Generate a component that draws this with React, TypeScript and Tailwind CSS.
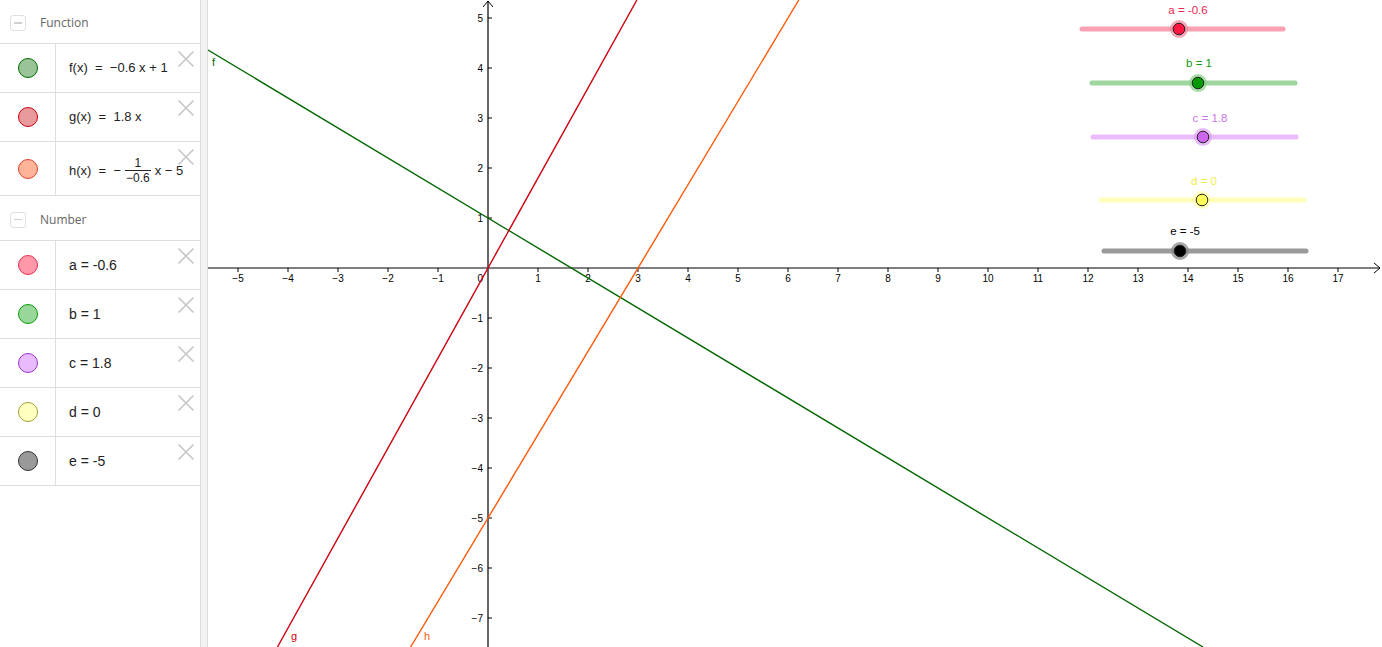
import React from "react";

const OX = 280;
const OY = 268;
const S = 50;
const W = 1174;
const H = 647;
const X = (x: number) => OX + S * x;
const Y = (y: number) => OY - S * y;

function fmt(n: number) {
  return n < 0 ? "\u2212" + Math.abs(n) : String(n);
}

function CloseIcon() {
  return (
    <svg width="18" height="18" viewBox="0 0 18 18" className="absolute right-[5px] top-[6px]">
      <path d="M1.5 1.5 L16.5 16.5 M16.5 1.5 L1.5 16.5" stroke="#c6c6c6" strokeWidth="1.6" fill="none" />
    </svg>
  );
}

function Header({ label, h }: { label: string; h: string }) {
  return (
    <div className={`flex items-center border-b border-[#dedede] pl-[10px] pt-[3px] ${h}`}>
      <div className="flex h-[16px] w-[16px] items-center justify-center rounded-[3px] border border-[#e0e0e0]">
        <div className="h-[1.5px] w-[8px] bg-[#cfcfcf]" />
      </div>
      <span className="ml-[14px] text-[12px] text-[#666]" style={{ fontFamily: "'Open Sans', 'Liberation Sans', sans-serif" }}>
        {label}
      </span>
    </div>
  );
}

function Row({
  fill,
  border,
  h,
  children,
}: {
  fill: string;
  border: string;
  h: string;
  children: React.ReactNode;
}) {
  return (
    <div className={`relative flex border-b border-[#dedede] ${h}`}>
      <div className="flex w-[56px] shrink-0 items-center justify-center border-r border-[#dedede]">
        <div className={`h-[20px] w-[20px] rounded-full border ${fill} ${border}`} />
      </div>
      <div
        className="flex flex-1 items-center whitespace-nowrap pl-[13px] text-[13px] text-[#222]"
        style={{ fontFamily: "'Liberation Sans', Arial, sans-serif" }}
      >
        {children}
      </div>
      <CloseIcon />
    </div>
  );
}

const sliders = [
  { label: "a = -0.6", x1: 874, x2: 1075, y: 29, k: 971, lx: 980, ly: 14, line: "#f7a1b1", knob: "#ff1744", halo: "#f28a9c", text: "#e8264f" },
  { label: "b = 1", x1: 884, x2: 1087, y: 83, k: 990, lx: 991, ly: 67, line: "#9fd69f", knob: "#009900", halo: "#8ccf8c", text: "#119911" },
  { label: "c = 1.8", x1: 885, x2: 1088, y: 137, k: 995, lx: 1002, ly: 122, line: "#ebbcfb", knob: "#cc66ee", halo: "#dca6f2", text: "#cc77ee" },
  { label: "d = 0", x1: 893, x2: 1096, y: 200, k: 994, lx: 996, ly: 185, line: "#ffffbb", knob: "#ffff55", halo: "#ffffaa", text: "#eeee44" },
  { label: "e = -5", x1: 896, x2: 1098, y: 251, k: 972, lx: 977, ly: 235, line: "#9a9a9a", knob: "#000000", halo: "#8a8a8a", text: "#000000" },
];

function Graphics() {
  const xs: number[] = [];
  for (let i = -5; i <= 17; i++) if (i !== 0) xs.push(i);
  const ys: number[] = [];
  for (let i = 5; i >= -7; i--) if (i !== 0) ys.push(i);

  const yb = -(H - OY) / S;
  const yt = OY / S;
  const xl = -OX / S;

  const f1 = { x: xl, y: -0.6 * xl + 1 };
  const f2 = { x: (1 - yb) / 0.6, y: yb };
  const g1 = { x: yb / 1.8, y: yb };
  const g2 = { x: yt / 1.8, y: yt };
  const h1 = { x: (yb + 5) * 0.6, y: yb };
  const h2 = { x: (yt + 5) * 0.6, y: yt };

  return (
    <svg width={W} height={H} viewBox={`0 0 ${W} ${H}`} className="block" style={{ fontFamily: "'Liberation Sans', Arial, sans-serif" }}>
      <line x1={0} y1={OY} x2={W - 2} y2={OY} stroke="#000" strokeWidth="1.2" />
      <polyline points={`${W - 8},${OY - 5} ${W - 2},${OY} ${W - 8},${OY + 5}`} fill="none" stroke="#000" strokeWidth="1" />
      <line x1={OX} y1={H} x2={OX} y2={1} stroke="#000" strokeWidth="1.2" />
      <polyline points={`${OX - 5},${7} ${OX},${1} ${OX + 5},${7}`} fill="none" stroke="#000" strokeWidth="1" />
      {xs.map((i) => (
        <g key={"x" + i}>
          <line x1={X(i)} y1={OY} x2={X(i)} y2={OY + 4} stroke="#000" strokeWidth="1" />
          <text x={X(i)} y={OY + 14} fontSize="10" textAnchor="middle" fill="#000">
            {fmt(i)}
          </text>
        </g>
      ))}
      {ys.map((i) => (
        <g key={"y" + i}>
          <line x1={OX} y1={Y(i)} x2={OX + 4} y2={Y(i)} stroke="#000" strokeWidth="1" />
          <text x={OX - 5} y={Y(i) + 3.5} fontSize="10" textAnchor="end" fill="#000">
            {fmt(i)}
          </text>
        </g>
      ))}
      <text x={OX - 5} y={OY + 14} fontSize="10" textAnchor="end" fill="#000">
        0
      </text>

      <line x1={X(f1.x)} y1={Y(f1.y)} x2={X(f2.x)} y2={Y(f2.y)} stroke="#006600" strokeWidth="1.4" />
      <line x1={X(g1.x)} y1={Y(g1.y)} x2={X(g2.x)} y2={Y(g2.y)} stroke="#cc0011" strokeWidth="1.4" />
      <line x1={X(h1.x)} y1={Y(h1.y)} x2={X(h2.x)} y2={Y(h2.y)} stroke="#ff5a0a" strokeWidth="1.4" />
      <text x={4} y={66} fontSize="11" fill="#006600">f</text>
      <text x={83} y={640} fontSize="11" fill="#cc0011">g</text>
      <text x={216} y={640} fontSize="11" fill="#ff5a0a">h</text>

      {sliders.map((s) => (
        <g key={s.label}>
          <line x1={s.x1} y1={s.y} x2={s.x2} y2={s.y} stroke={s.line} strokeWidth="5" strokeLinecap="round" />
          <circle cx={s.k} cy={s.y} r={9} fill={s.halo} opacity="0.75" />
          <circle cx={s.k} cy={s.y} r={5.8} fill={s.knob} stroke="#222" strokeWidth="1" />
          <text x={s.lx} y={s.ly} fontSize="11.5" textAnchor="middle" fill={s.text}>
            {s.label}
          </text>
        </g>
      ))}
    </svg>
  );
}

export default function App() {
  return (
    <div className="flex h-[647px] w-[1382px] overflow-hidden bg-white">
      <div className="w-[200px] shrink-0">
        <Header label="Function" h="h-[44px]" />
        <Row fill="bg-[#99c499]" border="border-[#006600]" h="h-[49px]">
          <span>f(x)&nbsp; = &nbsp;−0.6 x + 1</span>
        </Row>
        <Row fill="bg-[#e89a9c]" border="border-[#cc0011]" h="h-[49px]">
          <span>g(x)&nbsp; = &nbsp;1.8 x</span>
        </Row>
        <Row fill="bg-[#ffb499]" border="border-[#e0402a]" h="h-[54px]">
          <span className="flex items-center pt-[4px]">
            <span>h(x)&nbsp; = &nbsp;−</span>
            <span className="mx-[4px] flex flex-col items-center text-[12px] leading-[14px]">
              <span>1</span>
              <span className="border-t border-[#222] px-[1px]">−0.6</span>
            </span>
            <span>x − 5</span>
          </span>
        </Row>
        <Header label="Number" h="h-[45px]" />
        <Row fill="bg-[#ff99aa]" border="border-[#e6304f]" h="h-[49px]">
          <span className="text-[14px]">a = -0.6</span>
        </Row>
        <Row fill="bg-[#99d699]" border="border-[#00a000]" h="h-[49px]">
          <span className="text-[14px]">b = 1</span>
        </Row>
        <Row fill="bg-[#e8bbff]" border="border-[#9933cc]" h="h-[49px]">
          <span className="text-[14px]">c = 1.8</span>
        </Row>
        <Row fill="bg-[#ffffbf]" border="border-[#a0a030]" h="h-[49px]">
          <span className="text-[14px]">d = 0</span>
        </Row>
        <Row fill="bg-[#999999]" border="border-[#333333]" h="h-[49px]">
          <span className="text-[14px]">e = -5</span>
        </Row>
      </div>
      <div className="w-[8px] shrink-0 border-x border-[#dcdcdc] bg-[#f2f2f2]" />
      <div className="flex-1">
        <Graphics />
      </div>
    </div>
  );
}
